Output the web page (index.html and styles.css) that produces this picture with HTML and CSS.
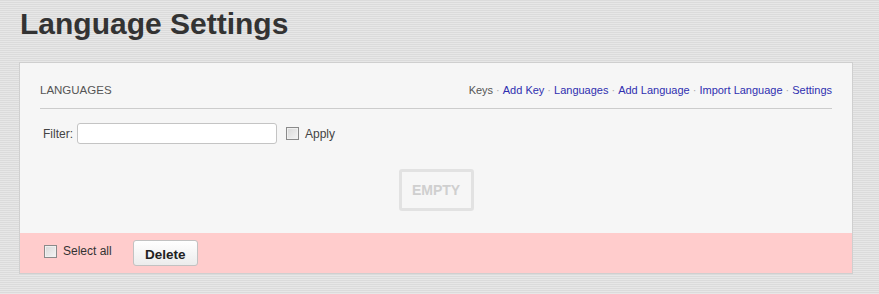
FILE: index.html
```html
<!DOCTYPE html>
<html lang="en">
<head>
  <meta charset="UTF-8" />
  <title>Language Settings</title>
  <link rel="stylesheet" href="styles.css">
</head>
<body>
  <h1 class="page-title">Language Settings</h1>

  <div class="panel">
    <div class="panel-body">
      <div class="panel-head">
        <span class="panel-name">LANGUAGES</span>
        <div class="panel-links">
          <span class="current">Keys</span>
          <span class="sep">&middot;</span>
          <a href="#">Add Key</a>
          <span class="sep">&middot;</span>
          <a href="#">Languages</a>
          <span class="sep">&middot;</span>
          <a href="#">Add Language</a>
          <span class="sep">&middot;</span>
          <a href="#">Import Language</a>
          <span class="sep">&middot;</span>
          <a href="#">Settings</a>
        </div>
      </div>

      <div class="filter-row">
        <label class="filter-label" for="filter">Filter:</label>
        <input type="text" id="filter" class="filter-input" />
        <label class="check-label"><input type="checkbox" class="check" /> Apply</label>
      </div>

      <div class="empty-wrap">
        <div class="empty-box">EMPTY</div>
      </div>
    </div>

    <div class="panel-foot">
      <label class="check-label select-all"><input type="checkbox" class="check" /> Select all</label>
      <button class="btn-delete">Delete</button>
    </div>
  </div>
</body>
</html>
```

FILE: styles.css
```css
body {
  margin: 0;
  padding: 0 26px 0 19px;
  font-family: "Liberation Sans", Arial, sans-serif;
  background-color: #dfdfdf;
  background-image: repeating-linear-gradient(0deg, rgba(255,255,255,0.25) 0px, rgba(255,255,255,0.25) 1px, rgba(0,0,0,0.02) 1px, rgba(0,0,0,0.02) 2px);
  color: #333;
}

.page-title {
  margin: 0;
  padding: 6px 0 0 1px;
  height: 62px;
  box-sizing: border-box;
  font-size: 30px;
  line-height: 36px;
  font-weight: bold;
  color: #333;
}

.panel {
  border: 1px solid #cfcfcf;
  background-color: #f6f6f6;
}

.panel-body {
  padding: 0 20px 22px;
}

.panel-head {
  display: flex;
  justify-content: space-between;
  align-items: center;
  padding: 21px 0 11px;
  line-height: 13px;
  border-bottom: 1px solid #cccccc;
}

.panel-name {
  font-size: 11.5px;
  color: #555;
}

.panel-links {
  font-size: 11px;
  color: #555;
  display: flex;
  gap: 3px;
}

.panel-links a {
  color: #2f2fb0;
  text-decoration: none;
}

.panel-links .sep {
  color: #aaa;
}

.filter-row {
  display: flex;
  align-items: center;
  margin-top: 14px;
  height: 21px;
  padding-left: 3px;
  font-size: 12px;
  color: #444;
}

.filter-label {
  margin-right: 4px;
}

.filter-input {
  width: 200px;
  height: 21px;
  box-sizing: border-box;
  border: 1px solid #c4c4c4;
  border-radius: 3px;
  background: #fff;
  margin: 0 9px 0 0;
}

.check-label {
  display: flex;
  align-items: center;
  gap: 6px;
  font-size: 12px;
  color: #444;
}

.check {
  appearance: none;
  -webkit-appearance: none;
  width: 13px;
  height: 13px;
  margin: 0;
  border: 1px solid #8a8a8a;
  background: linear-gradient(135deg, #d8d8d8, #f4f4f4);
  box-shadow: inset 0 0 0 1px #f0f0f0;
}

.empty-wrap {
  display: flex;
  justify-content: center;
  margin-top: 25px;
}

.empty-box {
  width: 75px;
  height: 42px;
  box-sizing: border-box;
  border: 3px solid #e2e2e2;
  border-radius: 3px;
  display: flex;
  align-items: center;
  justify-content: center;
  font-size: 14px;
  font-weight: bold;
  color: #cfcfcf;
}

.panel-foot {
  display: flex;
  align-items: center;
  height: 40px;
  padding-left: 24px;
  background-color: #ffcccc;
}

.select-all {
  margin-top: -4px;
  color: #333;
}

.btn-delete {
  margin-left: 21px;
  width: 65px;
  height: 26px;
  border: 1px solid #c2c2c2;
  border-radius: 3px;
  background: linear-gradient(#ffffff, #ececec);
  font-family: "Liberation Sans", Arial, sans-serif;
  font-size: 13.5px;
  font-weight: bold;
  color: #222;
  padding: 3px 0 0;
}
```
